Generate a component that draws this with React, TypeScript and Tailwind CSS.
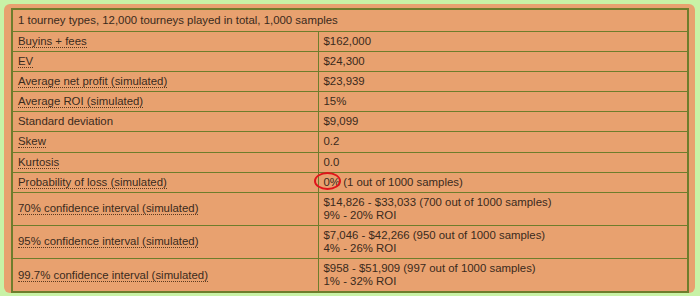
const rows: { label: string; tip?: boolean; value: string[] }[] = [
  { label: 'Buyins + fees', tip: true, value: ['$162,000'] },
  { label: 'EV', tip: true, value: ['$24,300'] },
  { label: 'Average net profit (simulated)', tip: true, value: ['$23,939'] },
  { label: 'Average ROI (simulated)', tip: true, value: ['15%'] },
  { label: 'Standard deviation', value: ['$9,099'] },
  { label: 'Skew', tip: true, value: ['0.2'] },
  { label: 'Kurtosis', tip: true, value: ['0.0'] },
  { label: 'Probability of loss (simulated)', tip: true, value: ['0% (1 out of 1000 samples)'] },
  { label: '70% confidence interval (simulated)', tip: true, value: ['$14,826 - $33,033 (700 out of 1000 samples)', '9% - 20% ROI'] },
  { label: '95% confidence interval (simulated)', tip: true, value: ['$7,046 - $42,266 (950 out of 1000 samples)', '4% - 26% ROI'] },
  { label: '99.7% confidence interval (simulated)', tip: true, value: ['$958 - $51,909 (997 out of 1000 samples)', '1% - 32% ROI'] },
];

export default function App() {
  return (
    <div className="w-[700px] h-[296px] bg-[#c8f2a6] p-[4px] font-['Liberation_Sans',Arial,sans-serif] text-[11.4px] text-[#3a2a1c]">
      <div className="relative h-[289px] w-[691px] rounded-[6px] bg-[#e8a16f] pl-[7px] pr-[6px] pt-[4px]">
        <table className="w-[678px] border-collapse border-2 border-[#6e7d2c]">
          <tbody>
            <tr>
              <td colSpan={2} className="border border-[#6e7d2c] px-[5px] py-[4px] leading-[13px]">
                1 tourney types, 12,000 tourneys played in total, 1,000 samples
              </td>
            </tr>
            {rows.map((r) => (
              <tr key={r.label}>
                <td className="w-[306px] border border-[#6e7d2c] px-[5px] py-[3px] leading-[13.1px]">
                  {r.tip ? (
                    <span className="border-b border-dotted border-[#5a3a20]">{r.label}</span>
                  ) : (
                    r.label
                  )}
                </td>
                <td className="border border-[#6e7d2c] px-[5px] py-[3px] leading-[13.1px]">
                  {r.value.map((v) => (
                    <div key={v}>{v}</div>
                  ))}
                </td>
              </tr>
            ))}
          </tbody>
        </table>
        {/* red circle drawn over the 0% */}
        <div className="absolute left-[310px] top-[168px] h-[18px] w-[27px] rounded-[50%] border-2 border-[#e0141a]" />
      </div>
    </div>
  );
}
